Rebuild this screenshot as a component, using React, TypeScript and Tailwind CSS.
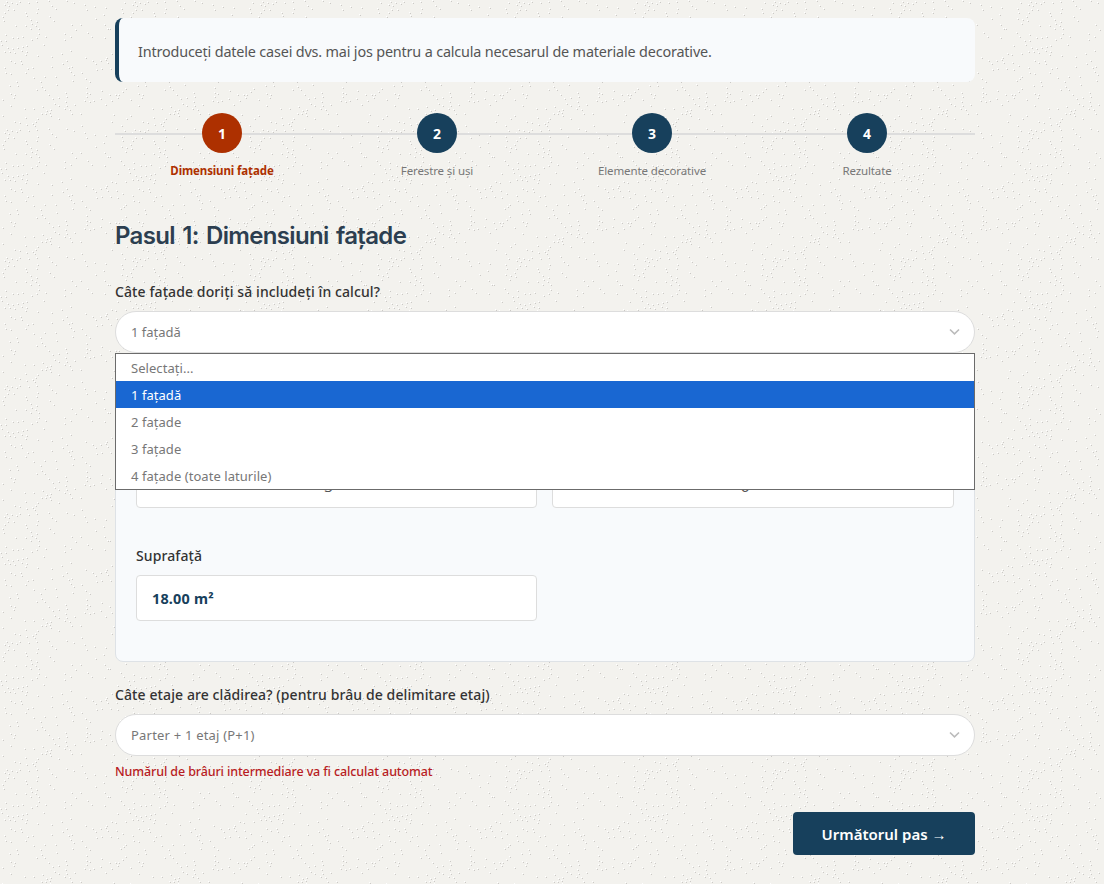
import React from "react";
import clsx from "clsx";

const steps = ["Dimensiuni fațade", "Ferestre și uși", "Elemente decorative", "Rezultate"];

const facadeOptions = [
  "Selectați...",
  "1 fațadă",
  "2 fațade",
  "3 fațade",
  "4 fațade (toate laturile)",
];

// Grains of the plaster tile (128px), as x,y pairs
const speckles = [
  [38, 2], [50, 1], [92, 1], [56, 4], [61, 5], [66, 4], [71, 3], [75, 2], [53, 8], [58, 8],
  [63, 9], [70, 7], [75, 8], [119, 7], [32, 10], [36, 11], [46, 10], [74, 11], [86, 12], [100, 13],
  [6, 14], [27, 14], [110, 10], [26, 16], [13, 17], [21, 17], [59, 17], [63, 19], [69, 17], [115, 17],
  [16, 20], [28, 19], [37, 19], [43, 22], [70, 20], [111, 20], [120, 23], [17, 26], [22, 25], [31, 25],
  [38, 26], [53, 24], [76, 25], [81, 24], [100, 23], [117, 24], [119, 28], [54, 29], [74, 29], [59, 30],
  [2, 29], [46, 33], [44, 35], [82, 34], [93, 33], [104, 33], [122, 31], [6, 35], [10, 38], [41, 37],
  [65, 38], [89, 38], [121, 37], [58, 42], [66, 42], [90, 43], [105, 41], [7, 44], [22, 47], [46, 45],
  [93, 46], [85, 46], [7, 49], [10, 50], [30, 51], [36, 51], [39, 51], [43, 48], [59, 50], [63, 51],
  [114, 49], [97, 51], [7, 53], [21, 55], [38, 54], [62, 54], [115, 53], [5, 57], [14, 57], [32, 57],
  [51, 56], [101, 55], [107, 54], [10, 58], [26, 61], [59, 62], [103, 60], [114, 58], [123, 61], [107, 62],
  [115, 62], [73, 65], [82, 65], [91, 63], [95, 67], [99, 66], [113, 65], [118, 66], [1, 70], [34, 71],
  [51, 72], [74, 74], [90, 70], [94, 70], [98, 69], [107, 75], [120, 70], [99, 72], [32, 78], [47, 75],
  [63, 78], [68, 79], [86, 75], [84, 78], [2, 82], [42, 82], [75, 81], [81, 80], [83, 82], [85, 86],
  [55, 86], [60, 87], [65, 88], [77, 87], [45, 87], [115, 85], [122, 87], [5, 89], [15, 91], [53, 89],
  [57, 90], [68, 86], [97, 85], [100, 90], [7, 94], [26, 92], [42, 93], [56, 94], [62, 94], [86, 93],
  [104, 93], [43, 97], [53, 97], [74, 97], [85, 97], [51, 101], [42, 103], [75, 100], [98, 101], [24, 99],
  [16, 103], [47, 104], [52, 105], [79, 104], [102, 105], [46, 108], [80, 108], [85, 106], [25, 109], [1, 109],
  [64, 110], [74, 110], [84, 110], [120, 109], [28, 113], [30, 113], [41, 117], [79, 113], [87, 113], [124, 114],
  [8, 117], [12, 121], [54, 119], [61, 122], [66, 122], [71, 121], [87, 118], [94, 121], [113, 118], [119, 121],
  [25, 122], [44, 121], [49, 125], [54, 125], [80, 124], [85, 122], [113, 124],
];

function Texture() {
  return (
    <svg className="absolute inset-0 h-full w-full" shapeRendering="crispEdges">
      <defs>
        <pattern id="plaster" x="80" y="44" width="128" height="128" patternUnits="userSpaceOnUse">
          {speckles.map(([x, y], i) => (
            <g key={i}>
              <rect x={x - 1} y={y - 1} width="1" height="1" fill="#ffffff" />
              <rect x={x} y={y} width="1" height="1" fill="#cbc9c6" />
            </g>
          ))}
        </pattern>
      </defs>
      <rect width="100%" height="100%" fill="url(#plaster)" />
    </svg>
  );
}

function Select({ value, className }: { value: string; className?: string }) {
  return (
    <div className="flex h-[42px] items-center justify-between rounded-full border border-[#dddddd] bg-white pr-[14px] pl-[15px]">
      <span className={clsx("pt-[2px] text-[13px] text-[#777777]", className)}>{value}</span>
      <svg width="11" height="8" viewBox="0 0 11 8" fill="none" stroke="#bbbbbb" strokeWidth="1.6">
        <path d="M1 1.5 L5.5 5.8 L10 1.5" />
      </svg>
    </div>
  );
}

function Label({ children }: { children: React.ReactNode }) {
  return (
    <div className="h-[22px] text-[14px] leading-[22px] font-medium tracking-[0.1px] whitespace-nowrap text-[#333333]">
      {children}
    </div>
  );
}

export default function App() {
  return (
    <main className="relative h-[884px] w-full overflow-hidden bg-[#f3f2ee] font-['Noto_Sans',sans-serif]">
      <Texture />
      <div className="relative ml-[115px] w-[860px] pt-[18px]">
        <div className="flex h-16 items-center rounded-lg border-l-4 border-[#17405c] bg-[#f8fafc] pl-[19px]">
          <p className="mt-1 text-[14.4px] tracking-[-0.17px] whitespace-nowrap text-[#555555]">
            Introduceți datele casei dvs. mai jos pentru a calcula necesarul de materiale decorative.
          </p>
        </div>

        <div className="relative mt-[31px] grid h-[68px] grid-cols-4">
          <div className="absolute top-5 left-0 h-[2px] w-full bg-[#dddddd]" />
          {steps.map((step, i) => (
            <div key={step} className="relative flex flex-col items-center pr-px">
              <div
                className={clsx(
                  "flex size-10 items-center justify-center rounded-full text-[14px] font-bold text-white",
                  i === 0 ? "bg-[#ad3000]" : "bg-[#17405c]"
                )}
              >
                {i + 1}
              </div>
              <span
                className={clsx(
                  "mt-2 text-[11.5px] leading-5 tracking-[-0.12px] whitespace-nowrap",
                  i === 0 ? "font-bold text-[#ad3000]" : "text-[#777777]"
                )}
              >
                {step}
              </span>
            </div>
          ))}
        </div>

        <h2 className="mt-[39px] h-8 font-['Inter',sans-serif] text-[24px] leading-8 font-semibold tracking-[-0.67px] [word-spacing:2px] whitespace-nowrap text-[#2c3e50]">
          Pasul 1: Dimensiuni fațade
        </h2>

        <div className="relative mt-[29px]">
          <Label>Câte fațade doriți să includeți în calcul?</Label>
          <div className="mt-2">
            <Select value="1 fațadă" />
          </div>
          <ul className="absolute top-[72px] left-0 z-10 w-full border border-[#6b6b6b] bg-white">
            {facadeOptions.map((option, i) => (
              <li
                key={option}
                className={clsx(
                  "h-[27px] pl-[15px] text-[13px] leading-[28px] tracking-[0.05px]",
                  i === 1 ? "bg-[#1967d2] text-white" : "text-[#777777]"
                )}
              >
                {option}
              </li>
            ))}
          </ul>
        </div>

        <div className="mt-[19px] h-[290px] rounded-lg border border-[#dee2e6] bg-[#f8fafc] px-5 pt-[89px]">
          <div className="grid grid-cols-[401px_402px] gap-x-[15px]">
            {["3", "6"].map((value) => (
              <div
                key={value}
                className="flex h-[46px] items-center justify-center rounded border border-[#dddddd] bg-white pt-[3px] pr-4 text-[15px] text-[#555555]"
              >
                {value}
              </div>
            ))}
            <div className="mt-[37px]">
              <Label>Suprafață</Label>
              <div className="mt-2 flex h-[46px] items-center rounded border border-[#dddddd] bg-white pt-px pl-[15px] text-[14.4px] font-bold tracking-[0.2px] text-[#17405c]">
                18.00 m²
              </div>
            </div>
          </div>
        </div>

        <div className="mt-[22px]">
          <Label>Câte etaje are clădirea? (pentru brâu de delimitare etaj)</Label>
          <div className="mt-2">
            <Select value="Parter + 1 etaj (P+1)" className="tracking-[0.2px]" />
          </div>
          <p className="mt-[6px] h-5 text-[12.5px] leading-5 font-medium tracking-[-0.12px] whitespace-nowrap text-[#b81c23]">
            Numărul de brâuri intermediare va fi calculat automat
          </p>
        </div>

        <div className="mt-[30px] flex justify-end">
          <button className="h-[43px] w-[182px] rounded bg-[#17405c] pt-px text-[15px] font-semibold whitespace-nowrap text-white">
            Următorul pas →
          </button>
        </div>
      </div>
    </main>
  );
}
